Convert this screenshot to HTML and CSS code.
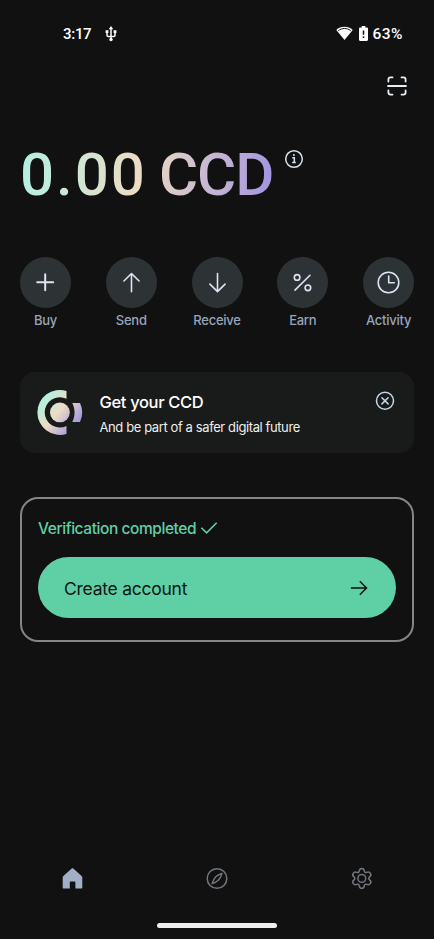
FILE: index.html
```html
<!DOCTYPE html>
<html lang="en">
<head>
<meta charset="utf-8">
<title>Wallet</title>
<link rel="stylesheet" href="styles.css">
</head>
<body>
<div class="screen">
  <header class="status">
    <div class="status-left">
      <span class="time">3:17</span>
      <svg class="usb" width="12" height="16" viewBox="0 0 12 16" fill="none" stroke="#fff" stroke-width="1.5"><path d="M6 2v12M2 6v3.2c0 .9.5 1.3 1.400 1.300h5.200c.9 0 1.400-.4 1.400-1.300V6"/><path d="M6 0 8.300 3.300H3.700zM.6 4.300h2.800v2.800H.6zM8.600 4.300h2.800v2.800H8.600z" fill="#fff" stroke="none"/><circle cx="6" cy="13.600" r="1.700" fill="#fff" stroke="none"/></svg>
    </div>
    <div class="status-right">
      <svg width="17" height="15" viewBox="0 0 17 15"><path d="M.3 3.900C2.500 1.800 5.300.7 8.500.7s6 1.100 8.200 3.200L8.500 14.100z" fill="#fff"/><path d="M2.300 4.700c3.800-3 8.600-3 12.400 0" fill="none" stroke="#111" stroke-width="1"/></svg>
      <svg class="battery" width="9" height="15" viewBox="0 0 9 15"><path d="M2.700 0h3.600v1.500h1.500c.7 0 1.200.5 1.200 1.200v11.100c0 .7-.5 1.200-1.200 1.200H1.200C.5 15 0 14.500 0 13.800V2.700c0-.7.500-1.200 1.200-1.200h1.500z" fill="#fff"/><path d="M4.500 4.500v4.300M4.500 10.200v1.700" stroke="#111" stroke-width="1.500"/></svg>
      <span class="percent">63%</span>
    </div>
  </header>

  <div class="toolbar">
    <svg width="20" height="20" viewBox="0 0 20 20" fill="none" stroke="#e8eef5" stroke-width="1.800" stroke-linecap="round"><path d="M1.400 5.500V3.400c0-1.200.8-2 2-2h2.100M14.500 1.400h2.100c1.200 0 2 .8 2 2v2.100M18.600 14.500v2.100c0 1.200-.8 2-2 2h-2.100M5.500 18.600H3.400c-1.200 0-2-.8-2-2v-2.100M1 10h18"/></svg>
  </div>

  <div class="balance">
    <h1 class="amount"><span class="digits">0.00</span> <span class="unit">CCD</span></h1>
    <svg class="info" width="20" height="20" viewBox="0 0 20 20" fill="none" stroke="#d3e2ef" stroke-width="1.500"><circle cx="10" cy="10" r="8.300"/><path d="M8.300 8.700h2v4.700M8.200 13.600h3.600"/><circle cx="9.900" cy="6" r="1" fill="#d3e2ef" stroke="none"/></svg>
  </div>

  <nav class="actions">
    <div class="action"><span class="disc"><svg width="23" height="23" viewBox="0.5 0.5 23 23"><path d="M11.700 3.800v16M3.700 11.800h16" stroke-width="2"/></svg></span><span class="label">Buy</span></div>
    <div class="action"><span class="disc"><svg width="23" height="23" viewBox="0.5 0.5 23 23"><path d="M12 21.300V3.200M4.400 10.500 12 3l7.600 7.500"/></svg></span><span class="label">Send</span></div>
    <div class="action"><span class="disc"><svg width="23" height="23" viewBox="0.5 0.5 23 23"><path d="M12 3v18M4.400 13.600 12 21.100l7.600-7.500"/></svg></span><span class="label">Receive</span></div>
    <div class="action"><span class="disc"><svg width="23" height="23" viewBox="0.5 0.5 23 23"><path d="M4.500 19.600 19.500 4.800"/><circle cx="6.600" cy="6.900" r="2.800"/><circle cx="17.400" cy="17.300" r="2.800"/></svg></span><span class="label">Earn</span></div>
    <div class="action"><span class="disc"><svg width="23" height="23" viewBox="0.5 0.5 23 23"><circle cx="12" cy="12" r="10.300"/><path d="M12.200 5.500v6.700h5.600"/></svg></span><span class="label">Activity</span></div>
  </nav>

  <section class="promo">
    <svg class="coin" width="46" height="46" viewBox="0 0 46 46">
      <defs><linearGradient id="pearl" gradientUnits="userSpaceOnUse" x1="5" y1="9" x2="38" y2="36"><stop offset="0" stop-color="#aff1e4"/><stop offset=".5" stop-color="#edddc4"/><stop offset="1" stop-color="#a99ce0"/></linearGradient></defs>
      <g fill="url(#pearl)"><path d="M29.500 1.900v7.800A15.200 15.200 0 1 0 29.500 37.100v7.800A22.500 22.500 0 1 1 29.500 1.900z"/><circle cx="22.900" cy="23.400" r="9.900"/><path d="M35.300 13.900h7.700a22.500 22.500 0 0 1 0 19h-7.700c3-6 3-13 0-19z"/></g>
    </svg>
    <div class="promo-text">
      <div class="promo-title">Get your CCD</div>
      <div class="promo-sub">And be part of a safer digital future</div>
    </div>
    <svg class="close" width="20" height="20" viewBox="0 0 20 20" fill="none" stroke="#c7d6e4" stroke-width="1.500" stroke-linecap="round"><circle cx="10" cy="9.800" r="8.500"/><path d="m6.900 6.700 6.200 6.200M13.100 6.700l-6.200 6.200"/></svg>
  </section>

  <section class="setup">
    <div class="verified"><span class="verified-text">Verification completed</span>
      <svg width="18" height="14" viewBox="0 0 18 14" fill="none" stroke="#5fcfa6" stroke-width="1.600"><path d="m1.300 6.700 5.300 5.200L16.700 1.700"/></svg>
    </div>
    <div class="create"><span class="create-text">Create account</span>
      <svg width="18" height="16" viewBox="0 0 18 16" fill="none" stroke="#0d1512" stroke-width="1.500"><path d="M.9 8h15.500M9.800 1.300 16.500 8l-6.700 6.700"/></svg>
    </div>
  </section>

  <nav class="tabs">
    <svg width="24" height="24" viewBox="0 0 24 24"><path d="M12.500 2.200c.3 0 .6.100.8.300l8.300 7.500c.5.400.7.900.7 1.500v10.300c0 .4-.2.600-.6.600h-6.300v-6c0-.5-.3-.8-.8-.8h-4c-.5 0-.8.300-.8.800v6H3.300c-.4 0-.6-.2-.6-.6V11.500c0-.6.200-1.100.7-1.500l8.300-7.500c.2-.2.500-.3.800-.3z" fill="#a2b0c7"/></svg>
    <svg width="24" height="24" viewBox="0 0 24 24" fill="none" stroke="#73777c" stroke-width="1.500" stroke-linejoin="round"><circle cx="12" cy="12.500" r="9.800"/><path d="M17 7.400c-2.600.8-4.800 2-6.200 3.400-1.500 1.500-2.700 4-3.600 6.700 2.600-.8 4.900-2.100 6.300-3.500 1.500-1.500 2.700-3.900 3.500-6.600z"/></svg>
    <svg width="24" height="24" viewBox="0 0 24 24" fill="none" stroke="#73777c" stroke-width="1.500" stroke-linejoin="round"><path d="M9.300 4c.2-1.600 1.100-2.500 2.500-2.500s2.300.9 2.500 2.500c.2 1.300 1.300 1.900 2.500 1.400 1.500-.6 2.800-.3 3.600 1s.5 2.600-.8 3.500c-1.100.8-1.100 2.200 0 3 1.300.9 1.600 2.200.8 3.500s-2.100 1.600-3.600 1c-1.200-.5-2.300.1-2.500 1.400-.2 1.600-1.100 2.500-2.500 2.500s-2.300-.9-2.500-2.500c-.2-1.300-1.300-1.900-2.500-1.400-1.500.6-2.800.3-3.600-1s-.5-2.600.8-3.500c1.100-.8 1.100-2.200 0-3-1.300-.9-1.600-2.200-.8-3.500s2.100-1.600 3.600-1c1.200.5 2.300-.1 2.500-1.400z" transform="translate(0 1)"/><circle cx="11.800" cy="12.400" r="3.900"/></svg>
  </nav>
  <div class="home-bar"></div>
</div>
</body>
</html>
```
FILE: styles.css
```css
* { box-sizing: border-box; }
html, body { margin: 0; }
body { background: #111; font-family: Inter, "Liberation Sans", sans-serif; }
svg { display: block; flex: none; }
span, h1, .promo-title, .promo-sub { white-space: nowrap; }

.screen { width: 434px; height: 939px; padding: 0 20px; display: flex; flex-direction: column; background: #111; overflow: hidden; }

.status { height: 67px; padding: 0 11px 0 43px; display: flex; align-items: center; justify-content: space-between; color: #fff; font: 500 15px/20px Roboto, sans-serif; }
.status-left, .status-right { display: flex; align-items: center; }
.usb { margin-left: 14px; }
.battery { margin: 0 4px 0 6px; }
.time { letter-spacing: -.3px; }
.percent { font-size: 15.500px; letter-spacing: .5px; }

.toolbar { height: 37px; display: flex; justify-content: flex-end; align-items: center; padding-right: 7px; }

.balance { height: 153px; padding-top: 35px; display: flex; align-items: flex-start; }
.amount { margin: 0; font: 500 60px/72px Roboto, sans-serif; word-spacing: -3px; color: transparent; background: linear-gradient(100deg, #b2f0e4 0%, #ecdcc2 48%, #a092e2 100%); -webkit-background-clip: text; background-clip: text; }
.digits { letter-spacing: 2px; }
.unit { letter-spacing: -1px; }
.info { margin: 9.500px 0 0 10.500px; }

.actions { height: 115px; display: flex; justify-content: space-between; }
.action { width: 51px; display: flex; flex-direction: column; align-items: center; }
.disc { width: 51px; height: 51px; border-radius: 50%; background: #2d3234; display: grid; place-items: center; flex: none; }
.disc svg { fill: none; stroke: #dbe4f2; stroke-width: 1.6; stroke-linecap: round; stroke-linejoin: round; }
.label { margin-top: 3px; font-size: 13px; line-height: 18px; font-weight: 500; color: #97a4bb; letter-spacing: -.25px; }

.promo { height: 81px; border-radius: 15px; background: #191b1a; display: flex; align-items: flex-start; padding: 17px 19px 0 17px; }
.promo-text { margin: 1px 0 0 16.500px; flex: 1; }
.promo-title { font-size: 16.500px; line-height: 24px; font-weight: 500; color: #fff; letter-spacing: -.35px; }
.promo-sub { margin-top: 4px; font-size: 13px; line-height: 18px; color: #edeeee; letter-spacing: -.4px; }
.close { margin-top: 2px; }

.setup { margin-top: 44px; height: 145px; border: 2px solid #858585; border-radius: 18px; padding: 18px 16px 0; }
.verified { height: 40px; display: flex; align-items: flex-start; color: #5fcfa6; font-size: 15.500px; line-height: 24px; font-weight: 500; letter-spacing: -.43px; }
.verified svg { margin: 4px 0 0 4px; }
.create { height: 61px; border-radius: 31px; background: #5fcfa6; display: flex; align-items: center; justify-content: space-between; padding: 0 28px 0 26px; color: #0d1512; font-size: 17.500px; letter-spacing: -.25px; }
.create-text { padding-top: 1px; }

.tabs { margin-top: 224px; height: 57px; display: flex; justify-content: space-between; padding: 0 40px; }
.home-bar { width: 120px; height: 5px; align-self: center; background: #eee; border-radius: 3px; }
```
